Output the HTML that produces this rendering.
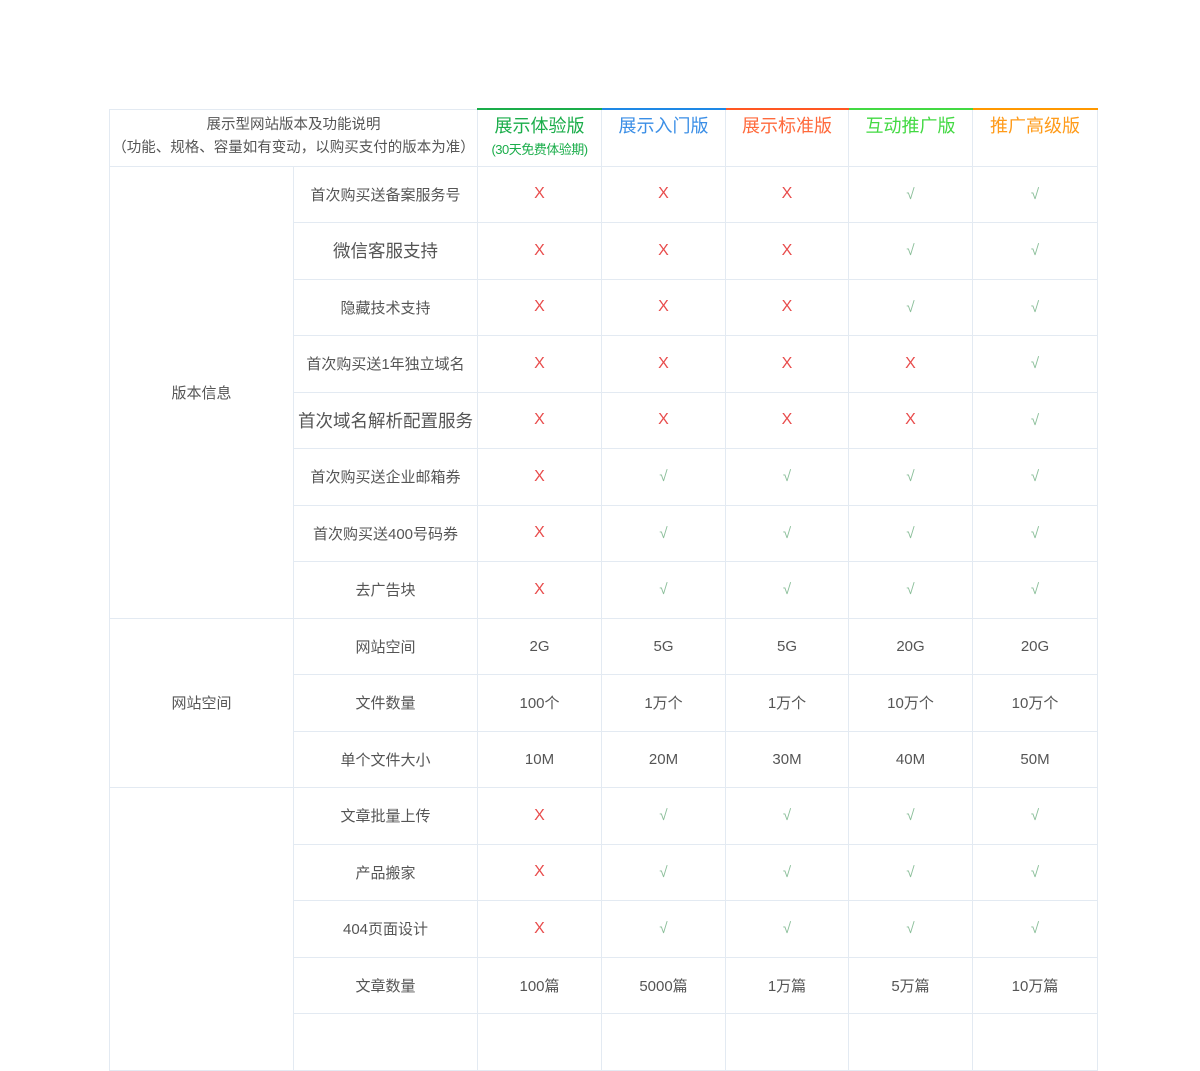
<!DOCTYPE html>
<html><head><meta charset="utf-8"><style>
body{margin:0;background:#fff;width:1200px;height:980px;overflow:hidden;font-family:"Liberation Sans","Noto Sans CJK SC",sans-serif;}
table{position:absolute;left:109px;top:108px;border-collapse:collapse;table-layout:fixed;width:989px;}
td{border:1px solid #e3eaf2;text-align:center;vertical-align:middle;color:#555;font-size:15px;padding:0;}
tr{height:56.5px}
tr.h{height:57px}
.h td{vertical-align:top;padding-top:2px;font-size:18px;}
.x{color:#e84c4c;font-size:16px}
.v{color:#8bbf9a;font-size:15px}
.b{font-size:17.5px}
</style></head><body>
<table>
<col style="width:184px"><col style="width:184px"><col style="width:124px"><col style="width:124px"><col style="width:123px"><col style="width:124px"><col style="width:125px">
<tr class="h"><td colspan="2" style="font-size:14.5px;color:#555;line-height:23px;padding-top:4px">展示型网站版本及功能说明<br>（功能、规格、容量如有变动，以购买支付的版本为准）</td>
<td style="color:#1aad4a;border-top:2px solid #1aad4a">展示体验版<div style="font-size:13px;margin-top:1px;letter-spacing:-0.5px">(30天免费体验期)</div></td>
<td style="color:#3a8ee6;border-top:2px solid #1e88e5">展示入门版</td>
<td style="color:#ff6a3c;border-top:2px solid #ff5722">展示标准版</td>
<td style="color:#43d943;border-top:2px solid #43d943">互动推广版</td>
<td style="color:#ff9b1a;border-top:2px solid #ff9800">推广高级版</td></tr>
<tr><td rowspan="8">版本信息</td><td>首次购买送备案服务号</td><td class="x">X</td><td class="x">X</td><td class="x">X</td><td class="v">√</td><td class="v">√</td></tr>
<tr><td class="b">微信客服支持</td><td class="x">X</td><td class="x">X</td><td class="x">X</td><td class="v">√</td><td class="v">√</td></tr>
<tr><td>隐藏技术支持</td><td class="x">X</td><td class="x">X</td><td class="x">X</td><td class="v">√</td><td class="v">√</td></tr>
<tr><td>首次购买送1年独立域名</td><td class="x">X</td><td class="x">X</td><td class="x">X</td><td class="x">X</td><td class="v">√</td></tr>
<tr><td class="b">首次域名解析配置服务</td><td class="x">X</td><td class="x">X</td><td class="x">X</td><td class="x">X</td><td class="v">√</td></tr>
<tr><td>首次购买送企业邮箱券</td><td class="x">X</td><td class="v">√</td><td class="v">√</td><td class="v">√</td><td class="v">√</td></tr>
<tr><td>首次购买送400号码券</td><td class="x">X</td><td class="v">√</td><td class="v">√</td><td class="v">√</td><td class="v">√</td></tr>
<tr><td>去广告块</td><td class="x">X</td><td class="v">√</td><td class="v">√</td><td class="v">√</td><td class="v">√</td></tr>
<tr><td rowspan="3">网站空间</td><td>网站空间</td><td>2G</td><td>5G</td><td>5G</td><td>20G</td><td>20G</td></tr>
<tr><td>文件数量</td><td>100个</td><td>1万个</td><td>1万个</td><td>10万个</td><td>10万个</td></tr>
<tr><td>单个文件大小</td><td>10M</td><td>20M</td><td>30M</td><td>40M</td><td>50M</td></tr>
<tr><td rowspan="5"></td><td>文章批量上传</td><td class="x">X</td><td class="v">√</td><td class="v">√</td><td class="v">√</td><td class="v">√</td></tr>
<tr><td>产品搬家</td><td class="x">X</td><td class="v">√</td><td class="v">√</td><td class="v">√</td><td class="v">√</td></tr>
<tr><td>404页面设计</td><td class="x">X</td><td class="v">√</td><td class="v">√</td><td class="v">√</td><td class="v">√</td></tr>
<tr><td>文章数量</td><td>100篇</td><td>5000篇</td><td>1万篇</td><td>5万篇</td><td>10万篇</td></tr>
<tr><td>&nbsp;</td><td></td><td></td><td></td><td></td><td></td></tr>
</table>
</body></html>
